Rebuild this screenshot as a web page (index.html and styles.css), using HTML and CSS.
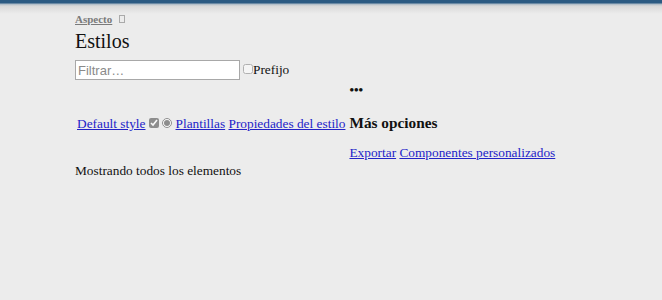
FILE: index.html
```html
<!DOCTYPE html>
<html lang="es">
<head>
    <meta charset="UTF-8">
    <meta name="viewport" content="width=device-width, initial-scale=1.0">
    <title>Estilos</title>
    <link rel="stylesheet" href="styles.css">
</head>
<body>
    <div class="topbar"></div>
    <div class="page">
        <div class="crumbs">
            <a href="#">Aspecto</a>
            <span class="tofu"></span>
        </div>
        <h1 class="title">Estilos</h1>
        <div class="filter-row">
            <input type="text" class="filter" placeholder="Filtrar…">
            <label class="prefix"><input type="checkbox">Prefijo</label>
        </div>
        <div class="toolbar">
            <div class="dots">•••</div>
            <div class="left-group">
                <a href="#">Default style</a>
                <input type="checkbox" checked>
                <input type="radio" checked>
                <a href="#">Plantillas</a>
                <a href="#">Propiedades del estilo</a>
            </div>
            <h2 class="more">Más opciones</h2>
            <div class="more-links">
                <a href="#">Exportar</a>
                <a href="#">Componentes personalizados</a>
            </div>
        </div>
        <p class="status">Mostrando todos los elementos</p>
    </div>
</body>
</html>
```

FILE: styles.css
```css
body {
    margin: 0;
    background-color: #ececec;
    font-family: "Liberation Serif", "Times New Roman", serif;
    font-size: 13.33px;
    color: #111;
}
.topbar {
    height: 14px;
    background: linear-gradient(#2b5a82 0, #2b5a82 3px, #a9b8c5 4px, #d8d8d8 6px, #ececec 14px);
}
.page {
    padding-left: 75px;
}
a {
    color: #2323c8;
}
.crumbs {
    font-size: 11px;
    font-weight: bold;
    height: 12px;
    line-height: 12px;
    margin-top: -1px;
}
.crumbs a {
    color: #7a7a7a;
}
.tofu {
    display: inline-block;
    width: 4px;
    height: 6px;
    border: 1px solid #aaa;
    margin-left: 4px;
}
.title {
    font-size: 20px;
    font-weight: normal;
    margin: 5px 0 0;
    line-height: 23px;
}
.filter-row {
    display: flex;
    align-items: flex-end;
    margin-top: 7px;
}
.filter {
    width: 165px;
    height: 20px;
    box-sizing: border-box;
    border: 1px solid #a8a8a8;
    padding: 1px 2px;
    font-family: "Liberation Sans", Arial, sans-serif;
    font-size: 13px;
    margin: 0;
}
.filter::placeholder {
    color: #8a8a8a;
}
.prefix {
    display: flex;
    align-items: baseline;
    margin-left: 3px;
    margin-bottom: 2px;
}
.prefix input {
    width: 10px;
    height: 10px;
    margin: 0;
    opacity: 0.5;
}
.toolbar {
    display: grid;
    grid-template-columns: auto auto;
    justify-content: start;
    align-items: baseline;
    column-gap: 4px;
}
.dots {
    grid-column: 2;
    font-weight: bold;
    font-size: 13px;
    line-height: 14px;
    margin-top: 3px;
}
.left-group {
    grid-column: 1;
    grid-row: 2;
    padding-left: 2px;
}
.left-group input {
    width: 10px;
    height: 10px;
    margin: 0;
    vertical-align: baseline;
    filter: grayscale(1);
    opacity: 0.7;
}
.more {
    grid-column: 2;
    grid-row: 2;
    font-size: 15.3px;
    margin: 17px 0 0;
}
.more-links {
    grid-column: 2;
    grid-row: 3;
    margin-top: 13px;
}
.status {
    margin: 2px 0 0;
}
```
